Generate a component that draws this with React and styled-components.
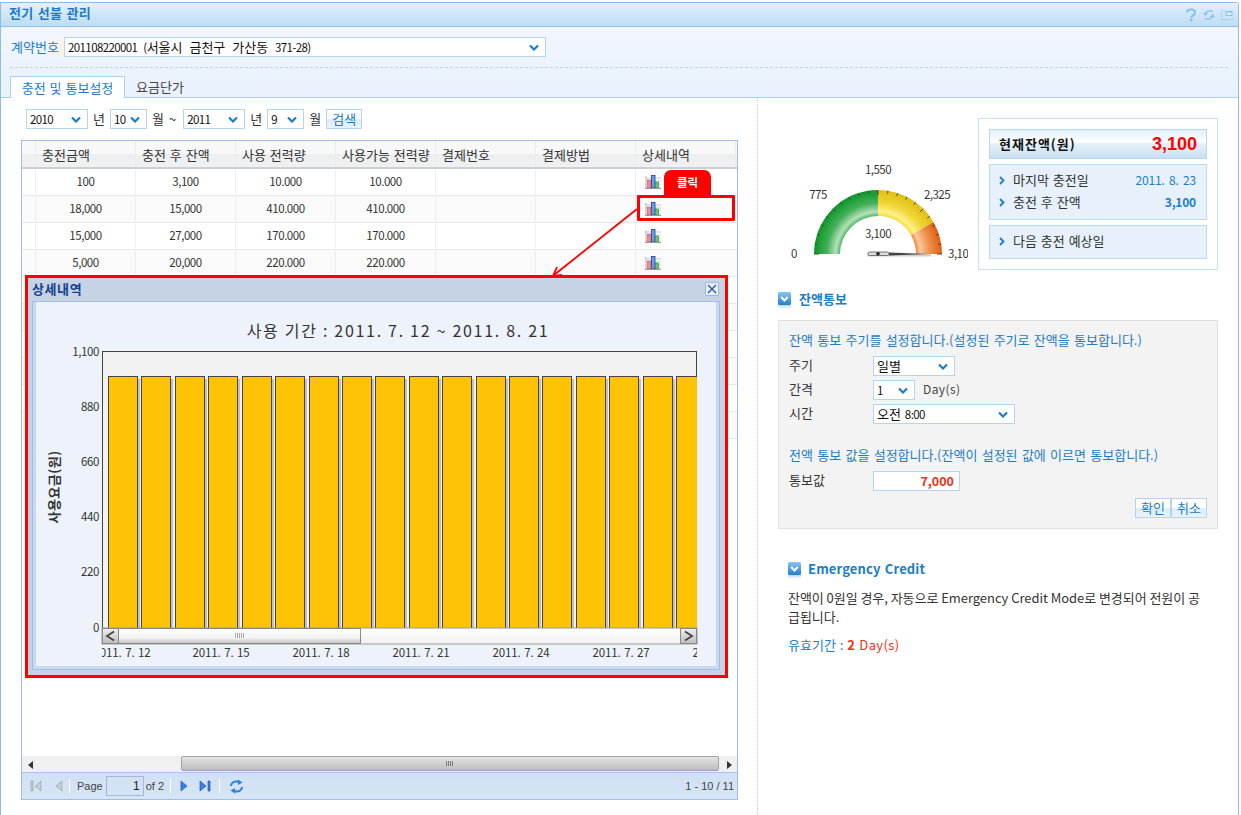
import React from "react";
import styled, { createGlobalStyle } from "styled-components";

const FONT = `"Noto Sans CJK KR", sans-serif`;

const Global = createGlobalStyle`
  html, body { margin: 0; padding: 0; background: #fff; overflow: hidden; }
  body { font: 13px/1.2 ${FONT}; color: #333; word-spacing: 1px; }
  * { box-sizing: border-box; }
`;

const Num = styled.span`font-size: 11.5px; letter-spacing: -.6px;`;

const Frame = styled.div`
  width: 1239px; height: 813px; margin-top: 2px;
  border: 1px solid #86c0ea; border-bottom: 0; border-top-right-radius: 3px;
  display: flex; flex-direction: column;
  background: #fff;
`;
const Header = styled.div`
  height: 24px; flex: none; display: flex; align-items: center; justify-content: space-between;
  padding: 0 5px 0 8px;
  background: linear-gradient(#e2f1fe, #bddcf2);
  border-bottom: 1px solid #8cc3ea;
`;
const Title = styled.h1`
  margin: 0 0 3px; font-size: 13px; font-weight: 700; color: #1a7cc9; letter-spacing: .3px;
`;
const HeaderIcons = styled.div`display: flex; align-items: center; gap: 6px;`;
const Top = styled.div`
  flex: none; height: 71px; padding-top: 10px;
  background: linear-gradient(#f2f6fe, #e9f1fc);
  display: flex; flex-direction: column;
`;
const ContractRow = styled.div`display: flex; align-items: center; gap: 5px; padding-left: 10px; height: 20px;`;
const BlueLabel = styled.span`color: #1a7dc8; width: 48px; white-space: nowrap;`;
const ContractText = styled.span`word-spacing: 4px;`;
const Dashed = styled.div`margin: 10px 10px 0 9px; border-top: 1px dashed #b7d6ee; height: 0;`;
const Tabs = styled.div`
  margin-top: 8px; height: 22px; padding-left: 9px; display: flex; align-items: stretch;
  border-bottom: 1px solid #a8d3ee;
`;
const Tab = styled.div`
  width: ${p => p.$active ? 115 : 70}px; margin-bottom: -1px;
  display: flex; align-items: center; justify-content: center; white-space: nowrap;
  color: ${p => p.$active ? "#1a7dc8" : "#444"};
  ${p => p.$active ? "background:#fff;border:1px solid #a8d3ee;border-bottom:0;" : ""}
`;
const Body = styled.div`flex: 1; display: flex; min-height: 0;`;
const Left = styled.div`width: 756px; flex: none; padding: 11px 0 0 20px; display: flex; flex-direction: column;`;
const Right = styled.div`flex: 1; border-left: 1px dotted #a9cdea; padding: 20px 0 0 20px;`;

const SearchRow = styled.div`display: flex; align-items: center; height: 20px; margin-left: 5px; margin-bottom: 11px;`;
const Unit = styled.span`margin: 0 5px 0 5px; width: 12px; color: #333;`;
const Tilde = styled.span`margin-left: 0; margin-right: 7px; color: #333;`;

const SelectBox = styled.div`
  width: ${p => p.$w}px; height: 20px; flex: none; background: #fff;
  border: 1px solid #b5d5ee; padding: 0 6px 0 3px;
  display: flex; align-items: center; justify-content: space-between;
  color: #111; white-space: nowrap;
`;
const Chevron = () => (
  <svg width="10" height="7" viewBox="0 0 10 7"><path d="M1 1.500 5 5.500 9 1.500" fill="none" stroke="#1a7dc8" strokeWidth="2.200" /></svg>
);
const Select = ({ w, children }) => <SelectBox $w={w}><span>{children}</span><Chevron /></SelectBox>;

const Btn = styled.button`
  width: ${p => p.$w || 36}px; height: 20px; padding: 0; font: inherit; color: #1a7dc8; cursor: pointer;
  border: 1px solid #b5d5ee;
  background: linear-gradient(#fff 45%, #dcecf9 55%, #eaf4fc);
`;

const Grid = styled.div`
  position: relative; width: 717px; height: 660px; border: 1px solid #a0bde8;
  display: flex; flex-direction: column; overflow: hidden;
`;
const cols = "14px repeat(7, 100px)";
const HeadRow = styled.div`
  height: 28px; flex: none; display: grid; grid-template-columns: ${cols};
  background: linear-gradient(#f8f8f8 50%, #eceef0 52%, #eef0f2);
  border-bottom: 2px solid #cfcfcf; padding-top: 1px;
`;
const HeadCell = styled.div`
  padding-left: 6px; display: flex; align-items: center; border-right: 1px solid #eaeaea; white-space: nowrap; color: #333;
`;
const Row = styled.div`
  height: 27px; flex: none; display: grid; grid-template-columns: ${cols};
  background: ${p => p.$alt ? "#fafafa" : "#fff"};
  border-bottom: 1px solid #e8e8e8; padding: 1px 0;
`;
const Cell = styled.div`
  display: flex; align-items: center; justify-content: center; border-right: 1px solid #eee; color: #333;
  font-size: 11.5px; letter-spacing: -.45px;
`;
const IconCell = styled.div`display: flex; align-items: center; padding-left: 9px;`;
const Spacer = styled.div`flex: 1;`;
const HScroll = styled.div`
  height: 16px; flex: none; background: #f0f0f0; display: flex; align-items: center; position: relative;
  padding: 1px 5px 0 6px; justify-content: space-between;
`;
const HThumb = styled.div`
  position: absolute; left: 159px; width: 538px; top: 0; height: 15px;
  border: 1px solid #a2a2a2; border-radius: 2px;
  background: linear-gradient(#e4e4e4, #bdbdbd);
  display: flex; align-items: center; justify-content: center;
`;
const Grip = styled.div`
  width: 8px; height: 5px;
  background: repeating-linear-gradient(90deg, #777 0 1px, transparent 1px 2px);
`;
const Pager = styled.div`
  height: 27px; flex: none; border-top: 1px solid #a9c6ea; display: flex; align-items: center;
  background: linear-gradient(#d0e1f4, #d7e5f5);
  padding: 0 3px 0 8px; word-spacing: 0;
  font: 11px "Liberation Sans", Arial, sans-serif; color: #444;
`;
const PagerSep = styled.div`width: 1px; height: 14px; background: #fff; margin: 0 ${p => p.$r}px 0 ${p => p.$l}px;`;
const PageInput = styled.div`
  width: 38px; height: 20px; border: 1px solid #a8b6cf; margin: 0 2px 0 3px; text-align: right; padding: 2px 3px 0 0; color: #222; font-size: 12px;
`;
const PagerInfo = styled.div`margin-left: auto;`;
const PagerGap = styled.span`width: ${p => p.$w}px; flex: none;`;

const Callout = styled.div`
  position: absolute; left: 642px; top: 29px; width: 47px; height: 25px;
  background: #f00; color: #fff; font-weight: 700; font-size: 11.5px;
  border-radius: 7px 7px 0 0; display: flex; align-items: center; justify-content: center;
`;
const Highlight = styled.div`
  position: absolute; left: 615px; top: 54px; width: 98px; height: 26px;
  border: 3px solid #f00; border-radius: 1px;
`;
const ArrowSvg = styled.svg`position: absolute; left: 520px; top: 60px;`;

const Modal = styled.div`
  position: absolute; left: 3px; top: 134px; width: 703px; height: 403px;
  border: 3px solid #f00; background: #c5d3e4;
  display: flex; flex-direction: column;
`;
const ModalBar = styled.div`
  height: 23px; flex: none; padding: 0 6px 2px 4px; display: flex; align-items: center; justify-content: space-between;
  color: #14428f; font-weight: 700; font-size: 13px; letter-spacing: .6px;
`;
const CloseBtn = styled.div`
  width: 14px; height: 14px; border: 1px solid #9fb9dc; border-radius: 2px; background: #e8f0fa;
  display: flex; align-items: center; justify-content: center;
`;
const ModalPanel = styled.div`
  margin: 0 5px 5px 4px; flex: 1; border: 1px solid #9fbfe8;
  background: #eef3fb;
  box-shadow: inset 3px 0 0 #c9daf0, inset -3px 0 0 #c9daf0, inset 0 -3px 0 #c9daf0;
  overflow: hidden; padding: 3px 0 0 3px;
`;
const ChartSvg = styled.svg`
  display: block;
  text { font-family: ${FONT}; fill: #333; word-spacing: 0; }
`;

const TopRow = styled.div`display: flex; align-items: flex-start;`;
const GaugeSvg = styled.svg`
  flex: none; margin-top: 37px; margin-right: 10px;
  text { font-family: ${FONT}; font-size: 11.5px; letter-spacing: -.5px; fill: #333; }
`;
const Card = styled.div`
  width: 240px; height: 152px; border: 1px solid #c5dff0; padding: 10px;
  display: flex; flex-direction: column;
`;
const CardHead = styled.div`
  height: 30px; flex: none; border: 1px solid #b9d7ee; padding: 0 9px; display: flex; align-items: center; justify-content: space-between;
  background: linear-gradient(#e3f0fb, #fff 42%, #e4f0fa 50%, #c8e0f3);
  font-weight: 700; color: #111; font-size: 13px; letter-spacing: 1px;
`;
const BigRed = styled.span`
  color: #f00; font: 700 18px "Liberation Sans", Arial, sans-serif; letter-spacing: 0;
`;
const InfoBox = styled.div`
  margin-top: ${p => p.$mt}px; height: ${p => p.$h}px; flex: none;
  background: #e6f1fc; border: 1px solid #bcd9f0; padding: 0 10px 2px 9px;
  display: flex; flex-direction: column; justify-content: center; gap: 3px;
`;
const InfoRow = styled.div`display: flex; align-items: center; justify-content: space-between; height: 19px;`;
const InfoLabel = styled.span`
  display: flex; align-items: center; gap: 8px; color: #333;
`;
const InfoValue = styled.span`
  color: #1a7dc8; font-size: 12px; letter-spacing: -.2px; word-spacing: 2px;
  font-weight: ${p => p.$bold ? 700 : 400};
`;

const SectionHead = styled.div`
  display: flex; align-items: flex-start; gap: ${p => p.$gap || 7}px; margin-top: ${p => p.$mt}px; height: 14px;
  color: #1a7dc8; font-weight: 700; font-size: 13px; line-height: 14px;
  letter-spacing: ${p => p.$ls || 0}px;
`;
const FormBox = styled.div`
  width: 440px; height: 209px; margin-top: 14px; background: #f3f3f3; border: 1px solid #e0e0e0;
  padding: 10px 10px 0;
`;
const BlueLine = styled.div`color: #1a7dc8; height: 18px; line-height: 18px; margin-top: ${p => p.$mt || 0}px; white-space: nowrap; word-spacing: 1.4px;`;
const FormRows = styled.div`display: grid; grid-template-columns: 84px 1fr; row-gap: 4px; margin-top: 7px;`;
const FormLabel = styled.div`height: 20px; display: flex; align-items: center; color: #333; padding-bottom: 2px;`;
const FormControl = styled.div`display: flex; align-items: center; gap: 8px; color: #444;`;
const DayText = styled.span`font-size: 12px; letter-spacing: .4px; margin-top: -2px;`;
const ValueInput = styled.div`
  width: 87px; height: 20px; background: #fff; border: 1px solid #b5d5ee; text-align: right; padding-right: 5px;
  color: #f2300f; font-weight: 700; line-height: 18px; font-size: 12.5px;
`;
const BtnRow = styled.div`display: flex; justify-content: flex-end; margin-top: 7px;`;
const Emergency = styled.div`padding-left: 10px;`;
const Para = styled.p`margin: 12px 0 0; line-height: 19px; color: #333; white-space: nowrap; word-spacing: 0; letter-spacing: -.05px;`;
const Validity = styled.div`margin-top: 11px; color: #1a7dc8;`;
const Red = styled.span`color: #f2300f; letter-spacing: .4px;`;
const RedB = styled(Red)`font-weight: 700;`;

const SectionIcon = () => (
  <svg width="14" height="18" viewBox="0 0 14 18" style={{ flex: "none" }}>
    <defs>
      <linearGradient id="si" x1="0" y1="0" x2="0" y2="1"><stop offset="0" stopColor="#8cc4f0" /><stop offset="1" stopColor="#1f7fd0" /></linearGradient>
      <linearGradient id="sr" x1="0" y1="0" x2="0" y2="1"><stop offset="0" stopColor="#b9d9f4" /><stop offset="1" stopColor="#fff" /></linearGradient>
    </defs>
    <rect x="0" y="0" width="13" height="13" rx="1.500" fill="url(#si)" />
    <rect x="0" y="13" width="13" height="4" fill="url(#sr)" />
    <path d="M3.200 5 6.500 8.500 9.800 5" fill="none" stroke="#fff" strokeWidth="2" />
  </svg>
);
const BarIcon = () => (
  <svg width="16" height="14" viewBox="0 0 16 14">
    <path d="M0 3h16M0 6h16M0 9h16M0 12h16" stroke="#ccc" strokeWidth="1" />
    <path d="M1 1v12" stroke="#bbb" />
    <rect x="2.500" y="5" width="3.500" height="8" fill="#f08a8a" stroke="#d05050" strokeWidth=".6" />
    <rect x="6.500" y="0.500" width="3.500" height="12.500" fill="#6a9fe8" stroke="#1a3fa8" strokeWidth=".8" />
    <rect x="10.500" y="7" width="3" height="6" fill="#6cc070" stroke="#2a8a30" strokeWidth=".6" />
    <path d="M0 13.500h16" stroke="#999" />
  </svg>
);
const Caret = () => (
  <svg width="6" height="9" viewBox="0 0 6 9" style={{ flex: "none" }}><path d="M1 1 4.500 4.500 1 8" fill="none" stroke="#1a7dc8" strokeWidth="1.800" /></svg>
);

const arcPath = (a0, a1, R, r, cx, cy) => {
  const p = (a, rad) => [cx + rad * Math.cos(a * Math.PI / 180), cy - rad * Math.sin(a * Math.PI / 180)];
  const [x0, y0] = p(a0, R), [x1, y1] = p(a1, R), [x2, y2] = p(a1, r), [x3, y3] = p(a0, r);
  return `M${x0} ${y0}A${R} ${R} 0 0 1 ${x1} ${y1}L${x2} ${y2}A${r} ${r} 0 0 0 ${x3} ${y3}Z`;
};
const Grad = ({ id, stops }) => (
  <radialGradient id={id} gradientUnits="userSpaceOnUse" cx="100" cy="99" r="64">
    <stop offset="0.594" stopColor={stops[0]} />
    <stop offset="0.66" stopColor={stops[1]} />
    <stop offset="0.8" stopColor={stops[2]} />
    <stop offset="1" stopColor={stops[3]} />
  </radialGradient>
);
const Gauge = () => {
  const cx = 100, cy = 99;
  const ticks = [];
  for (let a = 0; a <= 180; a += 9) {
    const major = a % 45 === 0;
    const rad = a * Math.PI / 180;
    const r0 = major ? 59 : 61;
    ticks.push(<line key={a} x1={cx + r0 * Math.cos(rad)} y1={cy - r0 * Math.sin(rad)} x2={cx + 64 * Math.cos(rad)} y2={cy - 64 * Math.sin(rad)} stroke="#4a4a3a" strokeWidth="1" />);
  }
  return (
    <GaugeSvg width="190" height="110" viewBox="0 0 190 110">
      <defs>
        <Grad id="gG" stops={["#58b868", "#b4e0ba", "#44b058", "#0c962a"]} />
        <Grad id="gY" stops={["#f5d840", "#fdf28a", "#f0d535", "#e0be14"]} />
        <Grad id="gO" stops={["#ea8a38", "#fdc89e", "#ee9450", "#de5e0c"]} />
      </defs>
      <path d={arcPath(180, 90, 64, 38, cx, cy)} fill="url(#gG)" />
      <path d={arcPath(90, 30, 64, 38, cx, cy)} fill="url(#gY)" />
      <path d={arcPath(30, 0, 64, 38, cx, cy)} fill="url(#gO)" />
      {ticks}
      <text x="16" y="103" textAnchor="middle">0</text>
      <text x="40" y="44" textAnchor="middle">775</text>
      <text x="100" y="19" textAnchor="middle">1,550</text>
      <text x="159" y="44" textAnchor="middle">2,325</text>
      <text x="170" y="103">3,100</text>
      <text x="100" y="83" textAnchor="middle">3,100</text>
      <path d="M90 97.500h63v2.500H90a1.300 1.300 0 0 1 0-2.500Z" fill="#bbb" opacity=".7" transform="translate(0 1.500)" />
      <rect x="90" y="97" width="21" height="3.500" rx="1.500" fill="#ddd" stroke="#555" strokeWidth=".8" />
      <path d="M111 97.500 151 99 111 100.500Z" fill="#444" />
      <circle cx="100" cy="98.700" r="1.800" fill="#222" />
    </GaugeSvg>
  );
};

const bars = Array.from({ length: 18 }, (_, i) => 72 + Math.round(i * 33.42));
const yTicks = [["1,100", 46], ["880", 101], ["660", 156], ["440", 211], ["220", 266], ["0", 322]];
const xLabels = [["2011. 7. 12", 86], ["2011. 7. 15", 185], ["2011. 7. 18", 285], ["2011. 7. 21", 385], ["2011. 7. 24", 485], ["2011. 7. 27", 585], ["2011. 7. 30", 685]];

const Chart = () => (
  <ChartSvg width="680" height="362" viewBox="0 0 680 362">
    <defs>
      <linearGradient id="thumb" x1="0" y1="0" x2="0" y2="1"><stop offset="0" stopColor="#fff" /><stop offset=".6" stopColor="#f4f4f4" /><stop offset="1" stopColor="#c4c4c4" /></linearGradient>
      <linearGradient id="sbtn" x1="0" y1="0" x2="0" y2="1"><stop offset="0" stopColor="#efefef" /><stop offset="1" stopColor="#bdbdbd" /></linearGradient>
      <linearGradient id="track" x1="0" y1="0" x2="0" y2="1"><stop offset="0" stopColor="#fff" /><stop offset="1" stopColor="#f2f2f2" /></linearGradient>
      <clipPath id="plot"><rect x="66" y="46" width="595" height="277" /></clipPath>
      <clipPath id="xl"><rect x="66" y="335" width="595" height="24" /></clipPath>
    </defs>
    <text x="362" y="32" textAnchor="middle" fontSize="16" letterSpacing="1.7">사용 기간 : 2011. 7. 12 ~ 2011. 8. 21</text>
    {yTicks.map(([t, y]) => <text key={t} x="63" y={y + 5} textAnchor="end" fontSize="11.5" letterSpacing="-.4">{t}</text>)}
    <text transform="translate(23 182) rotate(-90)" textAnchor="middle" fontSize="13" fontWeight="700" letterSpacing=".5">사용요금(원)</text>
    <rect x="66.500" y="46.500" width="594" height="277" fill="#f2f2f2" stroke="#444" />
    <g clipPath="url(#plot)">
      {bars.map(x => (
        <g key={x}>
          <rect x={x + 3} y="74" width="29" height="252" fill="#999" opacity=".55" />
          <rect x={x + .5} y="71.500" width="29" height="252" fill="#ffc305" stroke="#444" />
        </g>
      ))}
    </g>
    <rect x="66" y="323" width="595" height="16" fill="url(#track)" stroke="#999" />
    <rect x="66.500" y="323.500" width="16" height="15" fill="url(#sbtn)" stroke="#888" />
    <path d="M78 326.500 71 331 78 335.500" fill="none" stroke="#444" strokeWidth="1.800" />
    <rect x="82.500" y="323.500" width="242" height="15" fill="url(#thumb)" stroke="#888" />
    <path d="M199.500 328v5M201.500 328v5M203.500 328v5M205.500 328v5M207.500 328v5" stroke="#aaa" />
    <rect x="644.500" y="323.500" width="16" height="15" fill="url(#sbtn)" stroke="#888" />
    <path d="M649 326.500 656 331 649 335.500" fill="none" stroke="#444" strokeWidth="1.800" />
    <g clipPath="url(#xl)">
      {xLabels.map(([t, x]) => <text key={x} x={x} y="352" textAnchor="middle" fontSize="11.5" style={{ wordSpacing: "1px" }} letterSpacing="-.1">{t}</text>)}
    </g>
  </ChartSvg>
);

const rows = [
  ["100", "3,100", "10.000", "10.000"],
  ["18,000", "15,000", "410.000", "410.000"],
  ["15,000", "27,000", "170.000", "170.000"],
  ["5,000", "20,000", "220.000", "220.000"],
  ["7,000", "13,000", "120.000", "120.000"],
  ["3,000", "10,000", "90.000", "90.000"],
  ["9,000", "19,000", "300.000", "300.000"],
  ["2,000", "21,000", "60.000", "60.000"],
  ["6,000", "27,000", "150.000", "150.000"],
  ["4,000", "31,000", "100.000", "100.000"],
];
const heads = ["충전금액", "충전 후 잔액", "사용 전력량", "사용가능 전력량", "결제번호", "결제방법", "상세내역"];

const PIcon = ({ d, fill, stroke }) => (
  <svg width="14" height="14" viewBox="0 0 14 14" style={{ flex: "none" }}>
    <path d={d} fill={fill} stroke={stroke} strokeWidth=".7" />
  </svg>
);

export default function App() {
  return (
    <Frame>
      <Global />
      <Header>
        <Title>전기 선불 관리</Title>
        <HeaderIcons>
          <svg width="12" height="14" viewBox="0 0 12 14"><path d="M2 4.500C2 2.500 3.500 1.500 6 1.500s4 1 4 3-1.300 2.500-2.500 3.300S6 9 6 10" fill="none" stroke="#88c2ea" strokeWidth="2.200" /><rect x="4.800" y="11" width="2.500" height="2.500" fill="#88c2ea" /></svg>
          <svg width="12" height="12" viewBox="0 0 12 12"><path d="M2 5C3 2 7 1 10 2.500M10 7C9 10 5 11 2 9.500" fill="none" stroke="#88c2ea" strokeWidth="1.300" /><path d="M0 4h5L2.500 7ZM7 8h5L9.500 5Z" fill="#88c2ea" /></svg>
          <svg width="12" height="10" viewBox="0 0 12 10"><path d="M.5 .5h3M.5 .5v9h11v-2M.5 9.500h3" fill="none" stroke="#88c2ea" strokeDasharray="1 1" /><rect x="4.500" y="1" width="7" height="5" fill="#88c2ea" /><rect x="5.500" y="2.500" width="5" height="2.500" fill="#dceefb" /></svg>
        </HeaderIcons>
      </Header>
      <Top>
        <ContractRow>
          <BlueLabel>계약번호</BlueLabel>
          <Select w={482}><ContractText><Num>201108220001 (</Num>서울시 금천구 가산동 <Num>371-28)</Num></ContractText></Select>
        </ContractRow>
        <Dashed />
        <Tabs>
          <Tab $active>충전 및 통보설정</Tab>
          <Tab>요금단가</Tab>
        </Tabs>
      </Top>
      <Body>
        <Left>
          <SearchRow>
            <Select w={62}><Num>2010</Num></Select><Unit>년</Unit>
            <Select w={37}><Num>10</Num></Select><Unit>월</Unit><Tilde>~</Tilde>
            <Select w={62}><Num>2011</Num></Select><Unit>년</Unit>
            <Select w={37}><Num>9</Num></Select><Unit>월</Unit>
            <Btn $w={36}>검색</Btn>
          </SearchRow>
          <Grid>
            <HeadRow>
              <HeadCell />
              {heads.map(h => <HeadCell key={h}>{h}</HeadCell>)}
            </HeadRow>
            {rows.map((r, i) => (
              <Row key={i} $alt={i % 2 === 1}>
                <Cell />
                {r.map((c, j) => <Cell key={j}>{c}</Cell>)}
                <Cell /><Cell />
                <IconCell><BarIcon /></IconCell>
              </Row>
            ))}
            <Spacer />
            <HScroll>
              <svg width="6" height="8" viewBox="0 0 6 8"><path d="M5 0v8L0 4Z" fill="#333" /></svg>
              <HThumb><Grip /></HThumb>
              <svg width="6" height="8" viewBox="0 0 6 8"><path d="M1 0v8l5-4Z" fill="#333" /></svg>
            </HScroll>
            <Pager>
              <PIcon d="M1 2h2v10H1ZM11 2v10L5 7Z" fill="#c4ccd6" stroke="#9aa3ad" />
              <PagerGap $w={8} />
              <PIcon d="M10 2v10L4 7Z" fill="#c4ccd6" stroke="#9aa3ad" />
              <PagerSep $l={3} $r={7} />
              <span>Page</span>
              <PageInput>1</PageInput>
              <span>of 2</span>
              <PagerSep $l={6} $r={6} />
              <PIcon d="M4 2v10l6-5Z" fill="#3d7fe0" stroke="#1a56b8" />
              <PagerGap $w={7} />
              <PIcon d="M2 2v10l6-5ZM10 2h2v10h-2Z" fill="#3d7fe0" stroke="#1a56b8" />
              <PagerSep $l={7} $r={9} />
              <svg width="15" height="15" viewBox="0 0 15 15" style={{ flex: "none" }}><path d="M2 7C2 4 5 2 8 2.500l2 .5M13 8c0 3-3 5-6 4.500L5 12" fill="none" stroke="#2f7fd8" strokeWidth="2" /><path d="M9 .5l4.500 3L9 6ZM6 9 1.500 11.500 6 14.500Z" fill="#2f7fd8" /></svg>
              <PagerInfo>1 - 10 / 11</PagerInfo>
            </Pager>

            <Callout>클릭</Callout>
            <Highlight />
            <ArrowSvg width="100" height="80" viewBox="0 0 100 80">
              <path d="M95 8 12 74" stroke="#f00" strokeWidth="1.800" fill="none" />
              <path d="M20 74 11 75 15 66" stroke="#f00" strokeWidth="1.800" fill="none" />
            </ArrowSvg>
            <Modal>
              <ModalBar>
                <span>상세내역</span>
                <CloseBtn>
                  <svg width="10" height="10" viewBox="0 0 10 10"><path d="M1 1 9 9M9 1 1 9" stroke="#244f94" strokeWidth="1.200" /></svg>
                </CloseBtn>
              </ModalBar>
              <ModalPanel><Chart /></ModalPanel>
            </Modal>
          </Grid>
        </Left>
        <Right>
          <TopRow>
            <Gauge />
            <Card>
              <CardHead><span>현재잔액(원)</span><BigRed>3,100</BigRed></CardHead>
              <InfoBox $mt={5} $h={56}>
                <InfoRow><InfoLabel><Caret />마지막 충전일</InfoLabel><InfoValue>2011. 8. 23</InfoValue></InfoRow>
                <InfoRow><InfoLabel><Caret />충전 후 잔액</InfoLabel><InfoValue $bold>3,100</InfoValue></InfoRow>
              </InfoBox>
              <InfoBox $mt={5} $h={34}>
                <InfoRow><InfoLabel><Caret />다음 충전 예상일</InfoLabel></InfoRow>
              </InfoBox>
            </Card>
          </TopRow>
          <SectionHead $mt={22}><SectionIcon />잔액통보</SectionHead>
          <FormBox>
            <BlueLine>잔액 통보 주기를 설정합니다.(설정된 주기로 잔액을 통보합니다.)</BlueLine>
            <FormRows>
              <FormLabel>주기</FormLabel>
              <FormControl><Select w={82}>일별</Select></FormControl>
              <FormLabel>간격</FormLabel>
              <FormControl><Select w={42}><Num>1</Num></Select><DayText>Day(s)</DayText></FormControl>
              <FormLabel>시간</FormLabel>
              <FormControl><Select w={142}>오전 <Num>8:00</Num></Select></FormControl>
            </FormRows>
            <BlueLine $mt={22}>전액 통보 값을 설정합니다.(잔액이 설정된 값에 이르면 통보합니다.)</BlueLine>
            <FormRows>
              <FormLabel>통보값</FormLabel>
              <FormControl><ValueInput>7,000</ValueInput></FormControl>
            </FormRows>
            <BtnRow><Btn>확인</Btn><Btn>취소</Btn></BtnRow>
          </FormBox>
          <Emergency>
            <SectionHead $mt={33} $ls={0.15} $gap={6}><SectionIcon />Emergency Credit</SectionHead>
            <Para>잔액이 0원일 경우, 자동으로 Emergency Credit Mode로 변경되어 전원이 공<br />급됩니다.</Para>
            <Validity>유효기간 : <RedB>2</RedB> <Red>Day(s)</Red></Validity>
          </Emergency>
        </Right>
      </Body>
    </Frame>
  );
}
